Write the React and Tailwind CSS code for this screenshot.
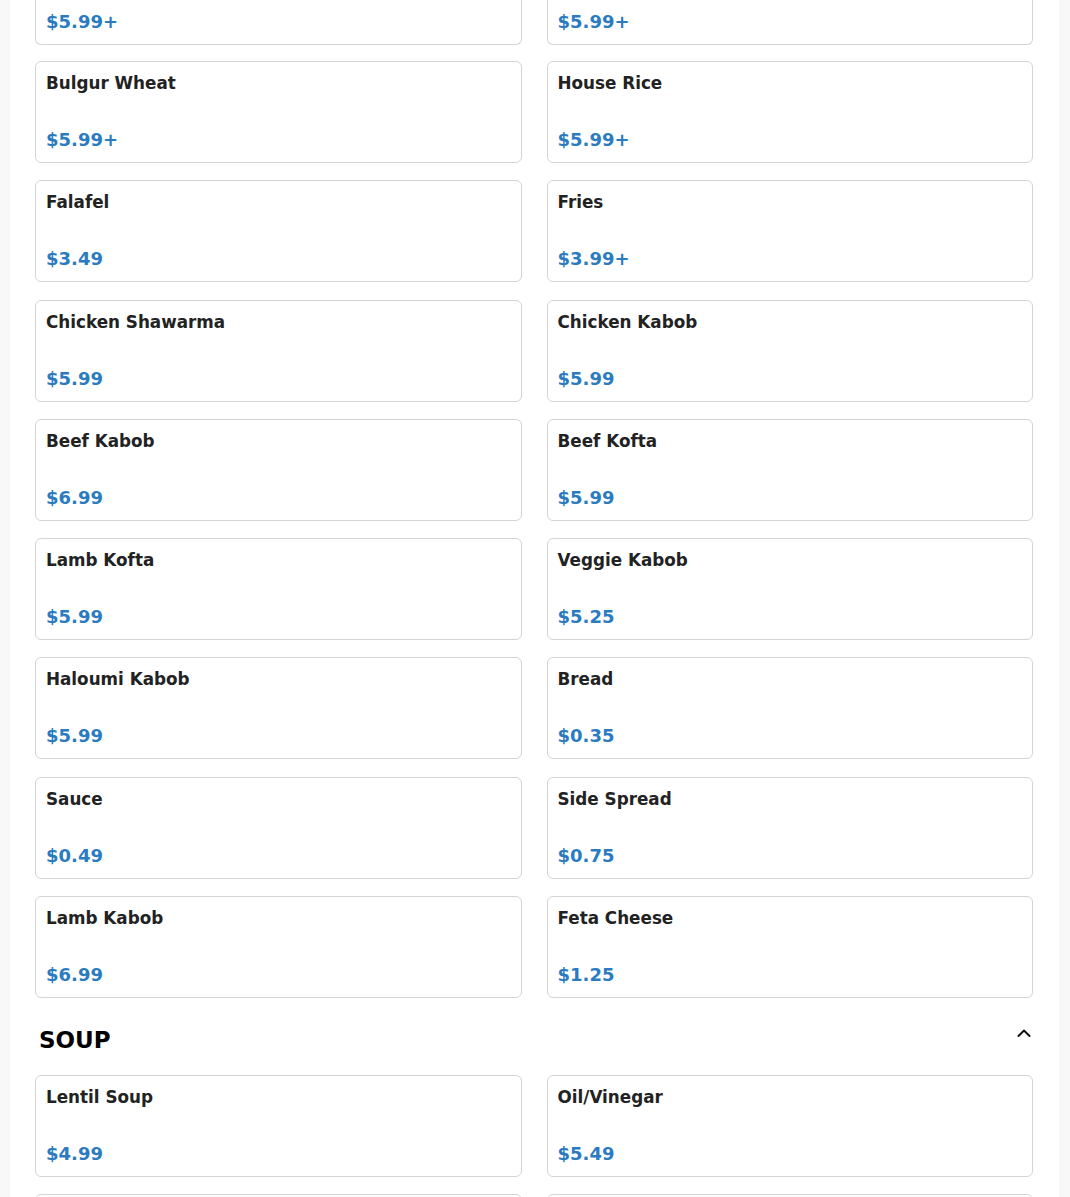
import React from "react";

const items = [
  ["Bulgur Wheat", "$5.99+"],
  ["House Rice", "$5.99+"],
  ["Falafel", "$3.49"],
  ["Fries", "$3.99+"],
  ["Chicken Shawarma", "$5.99"],
  ["Chicken Kabob", "$5.99"],
  ["Beef Kabob", "$6.99"],
  ["Beef Kofta", "$5.99"],
  ["Lamb Kofta", "$5.99"],
  ["Veggie Kabob", "$5.25"],
  ["Haloumi Kabob", "$5.99"],
  ["Bread", "$0.35"],
  ["Sauce", "$0.49"],
  ["Side Spread", "$0.75"],
  ["Lamb Kabob", "$6.99"],
  ["Feta Cheese", "$1.25"],
];

const soup = [
  ["Lentil Soup", "$4.99"],
  ["Oil/Vinegar", "$5.49"],
  ["", ""],
  ["", ""],
];

function Card({ name, price }) {
  return (
    <div className="flex flex-col justify-between h-[102px] border border-[#d4d4d4] rounded-[6px] px-[10px] pt-[9px] pb-[10px] bg-white">
      <div className="text-[16.8px] leading-[24px] font-bold text-[#222]">{name}</div>
      <div className="text-[18px] leading-[24px] font-bold text-[#2b7bc1]">{price}</div>
    </div>
  );
}

function ChevronUp() {
  return (
    <svg width="20" height="20" viewBox="0 0 20 20" fill="none" stroke="#111" strokeWidth="2" strokeLinecap="round" strokeLinejoin="round">
      <path d="M4.5 13l5.5-5.5 5.5 5.5" />
    </svg>
  );
}

export default function App() {
  return (
    <div className="bg-[#f8f8f8] pl-[10px] pr-[11px] h-[1197px] overflow-hidden" style={{ fontFamily: '"DejaVu Sans", sans-serif' }}>
      <div className="bg-white pl-[25px] pr-[26px] h-full">
        {/* partial top row */}
        <div className="grid grid-cols-2 gap-x-[25px]">
          {["$5.99+", "$5.99+"].map((p, i) => (
            <div key={i} className="h-[45px] border border-t-0 border-[#d4d4d4] rounded-b-[6px] px-[10px] pb-[10px] flex items-end">
              <div className="text-[18px] leading-[24px] font-bold text-[#2b7bc1]">{p}</div>
            </div>
          ))}
        </div>

        <div className="grid grid-cols-2 gap-x-[25px] gap-y-[17.25px] mt-[16px]">
          {items.map(([n, p]) => (
            <Card key={n} name={n} price={p} />
          ))}
        </div>

        {/* soup */}
        <div className="flex justify-between items-start mt-[26px] pl-[4px]">
          <h2 className="text-[23px] leading-[32px] font-bold text-black">SOUP</h2>
          <div className="-mt-[1px] -mr-[1px]">
            <ChevronUp />
          </div>
        </div>

        <div className="grid grid-cols-2 gap-x-[25px] gap-y-[17.25px] mt-[19px]">
          {soup.map(([n, p], i) => (
            <Card key={i} name={n} price={p} />
          ))}
        </div>
      </div>
    </div>
  );
}
